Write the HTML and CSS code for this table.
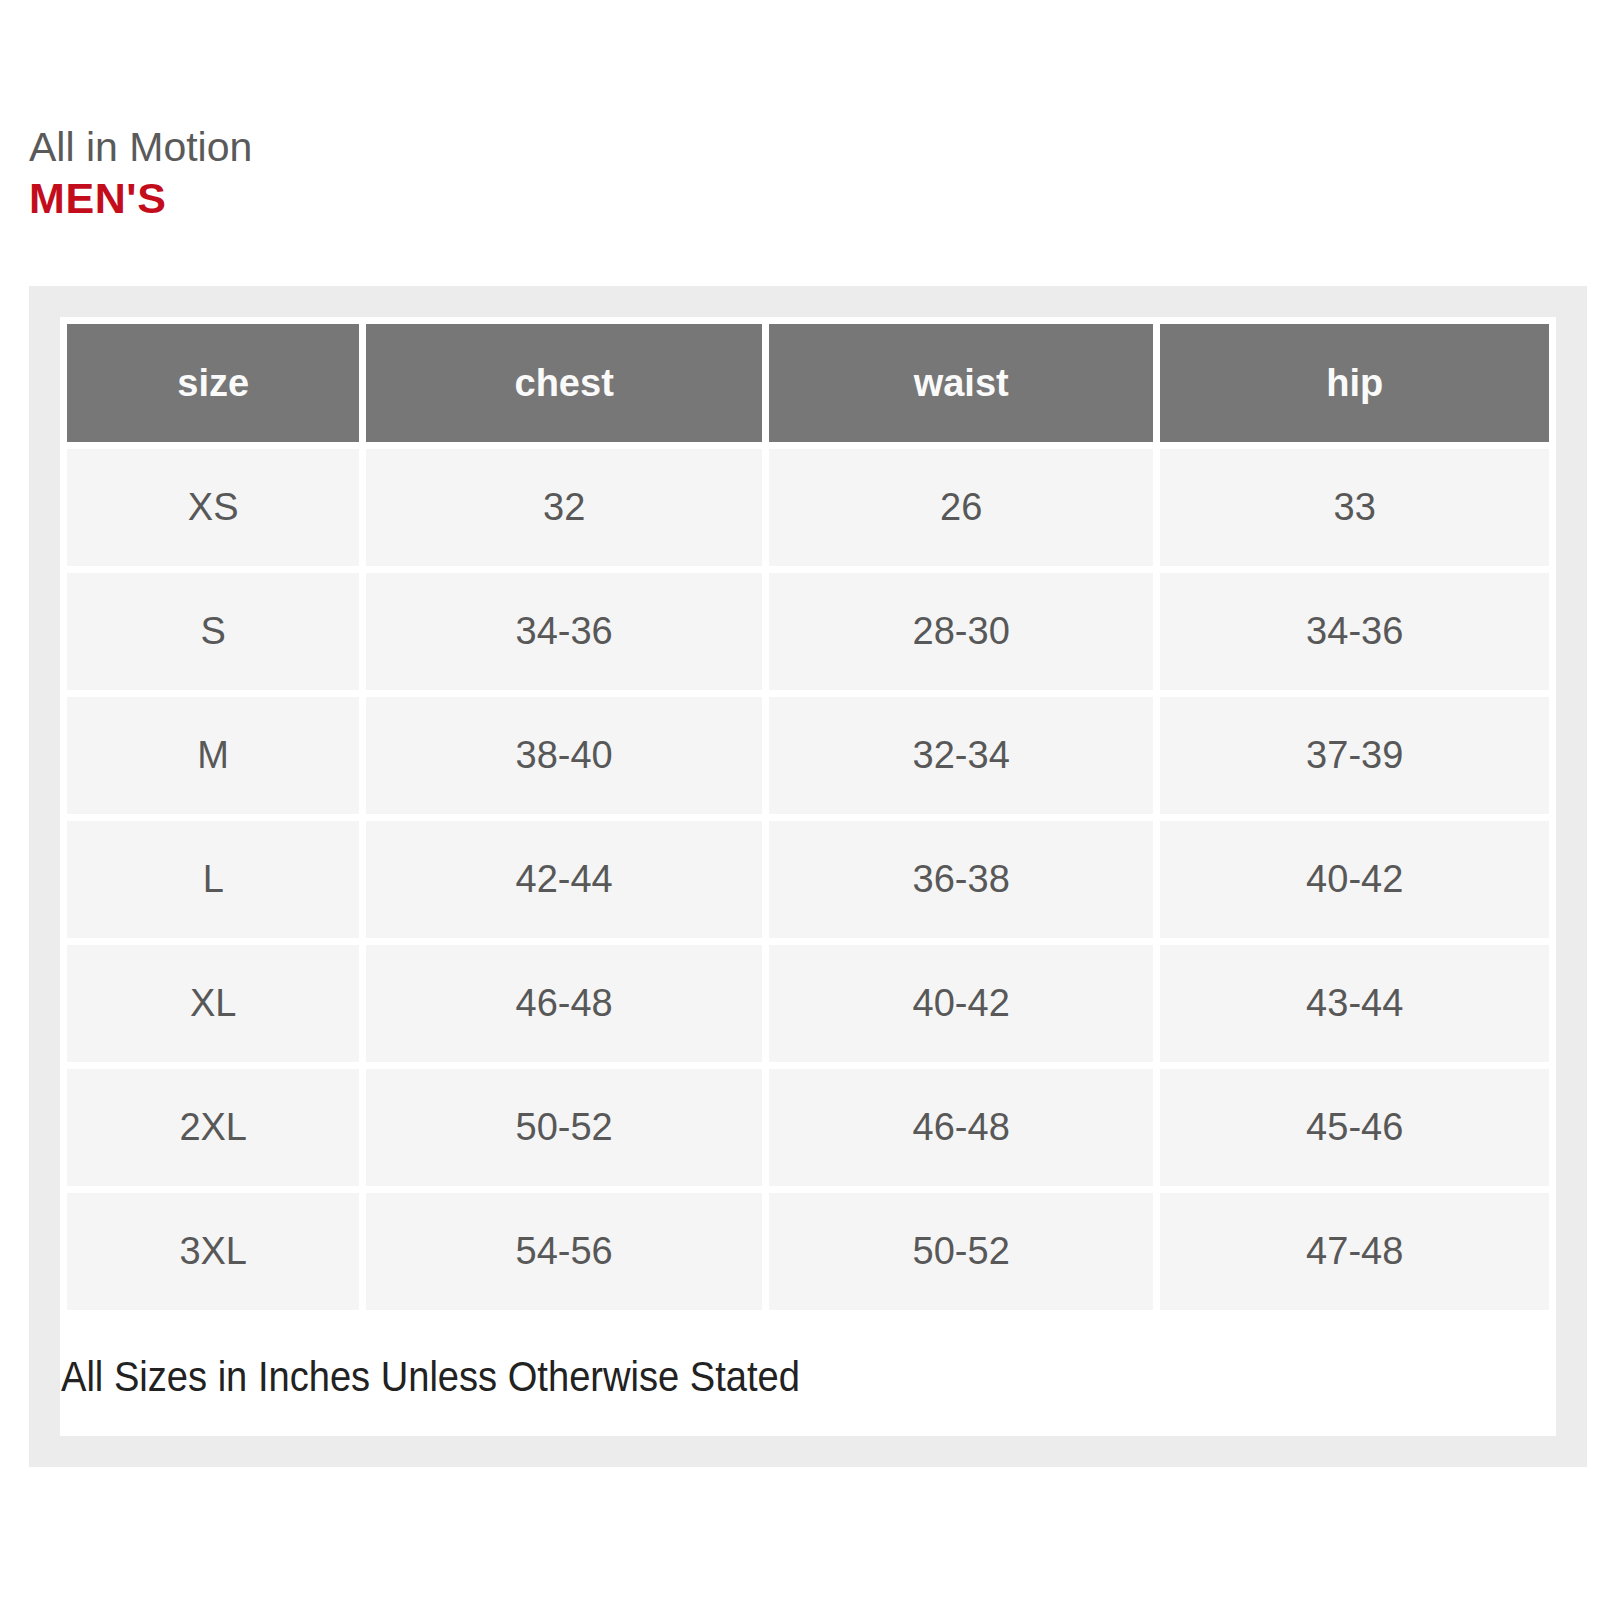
FILE: index.html
```html
<!DOCTYPE html>
<html lang="en">
<head>
<meta charset="utf-8">
<title>All in Motion Men's Size Chart</title>
<link rel="stylesheet" href="styles.css">
</head>
<body>
<div class="page">
  <header class="brand">
    <div class="brand-name">All in Motion</div>
    <div class="brand-line">MEN'S</div>
  </header>
  <section class="frame">
    <div class="sheet">
      <table class="chart">
        <thead>
          <tr>
            <th class="c-size">size</th>
            <th class="c-chest">chest</th>
            <th class="c-waist">waist</th>
            <th class="c-hip">hip</th>
          </tr>
        </thead>
        <tbody>
          <tr><td>XS</td><td>32</td><td>26</td><td>33</td></tr>
          <tr><td>S</td><td>34-36</td><td>28-30</td><td>34-36</td></tr>
          <tr><td>M</td><td>38-40</td><td>32-34</td><td>37-39</td></tr>
          <tr><td>L</td><td>42-44</td><td>36-38</td><td>40-42</td></tr>
          <tr><td>XL</td><td>46-48</td><td>40-42</td><td>43-44</td></tr>
          <tr><td>2XL</td><td>50-52</td><td>46-48</td><td>45-46</td></tr>
          <tr><td>3XL</td><td>54-56</td><td>50-52</td><td>47-48</td></tr>
        </tbody>
      </table>
      <div class="note"><span class="note-text">All Sizes in Inches Unless Otherwise Stated</span></div>
    </div>
  </section>
</div>
</body>
</html>
```

FILE: styles.css
```css
html, body {
  margin: 0;
  padding: 0;
  background: #ffffff;
}

body {
  font-family: "Liberation Sans", Arial, sans-serif;
}

.page {
  width: 1600px;
  padding-top: 122px;
}

.brand {
  padding-left: 29px;
}

.brand-name {
  font-size: 41px;
  line-height: 51px;
  color: #5a5a5a;
}

.brand-line {
  font-size: 43px;
  line-height: 51px;
  font-weight: bold;
  color: #c40d1c;
  letter-spacing: 0.6px;
}

.frame {
  margin: 62px 13px 0 29px;
  padding: 31px;
  background: #ececec;
}

.sheet {
  background: #ffffff;
}

.chart {
  width: 100%;
  border-collapse: separate;
  border-spacing: 7px;
  table-layout: fixed;
}

.chart th,
.chart td {
  text-align: center;
  vertical-align: middle;
  padding: 0;
}

.chart th {
  height: 118px;
  background: #777777;
  color: #fafafa;
  font-size: 38px;
  font-weight: bold;
}

.chart td {
  height: 117px;
  background: #f5f5f5;
  color: #585858;
  font-size: 38px;
}

.c-size { width: 292px; }
.c-chest { width: 395px; }
.c-waist { width: 384px; }
.c-hip { width: 388px; }

.note {
  height: 119px;
  padding-left: 1px;
  display: flex;
  align-items: center;
}

.note-text {
  display: inline-block;
  font-size: 42px;
  color: #222222;
  transform: scaleX(0.907);
  transform-origin: left center;
  white-space: nowrap;
}
```
